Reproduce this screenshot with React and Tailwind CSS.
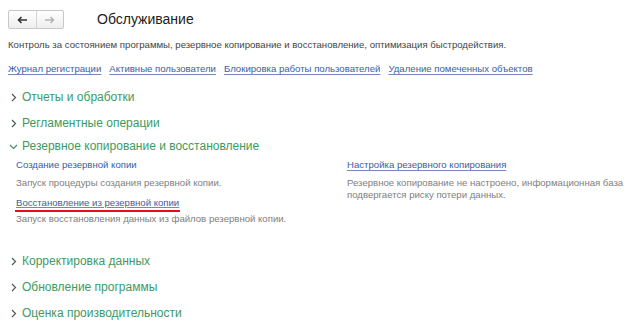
const groupsTop = ["Отчеты и обработки", "Регламентные операции"];
const groupsBottom = ["Корректировка данных", "Обновление программы", "Оценка производительности"];
const links = [
  "Журнал регистрации",
  "Активные пользователи",
  "Блокировка работы пользователей",
  "Удаление помеченных объектов",
];

function Chevron({ open = false }) {
  return (
    <svg width="9" height="9" viewBox="0 0 9 9" className="shrink-0">
      {open ? (
        <path d="M1 3 L4.5 6.5 L8 3" fill="none" stroke="#4a8a62" strokeWidth="1.2" />
      ) : (
        <path d="M3 1 L6.5 4.5 L3 8" fill="none" stroke="#4d5a52" strokeWidth="1.2" />
      )}
    </svg>
  );
}

function GroupHeader({ title, open, className = "h-[26px]" }) {
  return (
    <div className={`flex items-center gap-[4px] pl-[9px] ${className}`}>
      <Chevron open={open} />
      <span className="text-[12px] text-[#3d9a62]">{title}</span>
    </div>
  );
}

export default function App() {
  return (
    <div className="w-[642px] h-[332px] bg-white overflow-hidden font-['Liberation_Sans',Arial,sans-serif]">
      {/* header */}
      <div className="flex items-center pt-[9px] pl-[8px]">
        <div className="flex h-[19px] w-[56px] rounded-[2px] border border-[#c8c8c8] bg-gradient-to-b from-white to-[#eeeeee]">
          <div className="flex flex-1 items-center justify-center border-r border-[#d4d4d4]">
            <svg width="11" height="8" viewBox="0 0 11 8">
              <path d="M10 4 H2 M4.5 1 L1.5 4 L4.5 7" fill="none" stroke="#333" strokeWidth="1.6" />
            </svg>
          </div>
          <div className="flex flex-1 items-center justify-center">
            <svg width="11" height="8" viewBox="0 0 11 8">
              <path d="M1 4 H9 M6.5 1 L9.5 4 L6.5 7" fill="none" stroke="#b4b4b4" strokeWidth="1.6" />
            </svg>
          </div>
        </div>
        <h1 className="ml-[33px] text-[14px] text-[#222]">Обслуживание</h1>
      </div>

      <p className="mt-[8px] pl-[8px] text-[9.6px] leading-[14px] text-[#444]">
        Контроль за состоянием программы, резервное копирование и восстановление, оптимизация быстродействия.
      </p>

      <div className="mt-[10px] flex gap-[8px] pl-[8px] text-[9.6px] leading-[14px]">
        {links.map((l) => (
          <a key={l} className="text-[#3a5da3] underline underline-offset-[2px] decoration-[#7088ba]">
            {l}
          </a>
        ))}
      </div>

      <div className="mt-[8px]">
        {groupsTop.map((g) => (
          <GroupHeader key={g} title={g} />
        ))}
        <GroupHeader title="Резервное копирование и восстановление" open className="h-[20px]" />

        <div className="flex pl-[16px] text-[9.6px]">
          <div className="w-[331px] leading-[18px]">
            <a className="block text-[#3a5da3]">Создание резервной копии</a>
            <p className="text-[#808080]">Запуск процедуры создания резервной копии.</p>
            <div className="h-[18px] pt-[2px]">
              <span className="-ml-[1px] inline-block px-[1px] pb-[1px] leading-[13px] border-b-2 border-[#e0101e] text-[#3a5da3] underline underline-offset-[1px] decoration-[#7088ba]">
                Восстановление из резервной копии
              </span>
            </div>
            <p className="text-[#808080]">Запуск восстановления данных из файлов резервной копии.</p>
          </div>
          <div className="leading-[18px]">
            <a className="block text-[#3a5da3] underline underline-offset-[2px] decoration-[#7088ba]">
              Настройка резервного копирования
            </a>
            <p className="pt-[3px] leading-[12px] text-[#808080]">
              Резервное копирование не настроено, информационная база
              <br />
              подвергается риску потери данных.
            </p>
          </div>
        </div>

        <div className="mt-[20px]">
          {groupsBottom.map((g) => (
            <GroupHeader key={g} title={g} />
          ))}
        </div>
      </div>
    </div>
  );
}
